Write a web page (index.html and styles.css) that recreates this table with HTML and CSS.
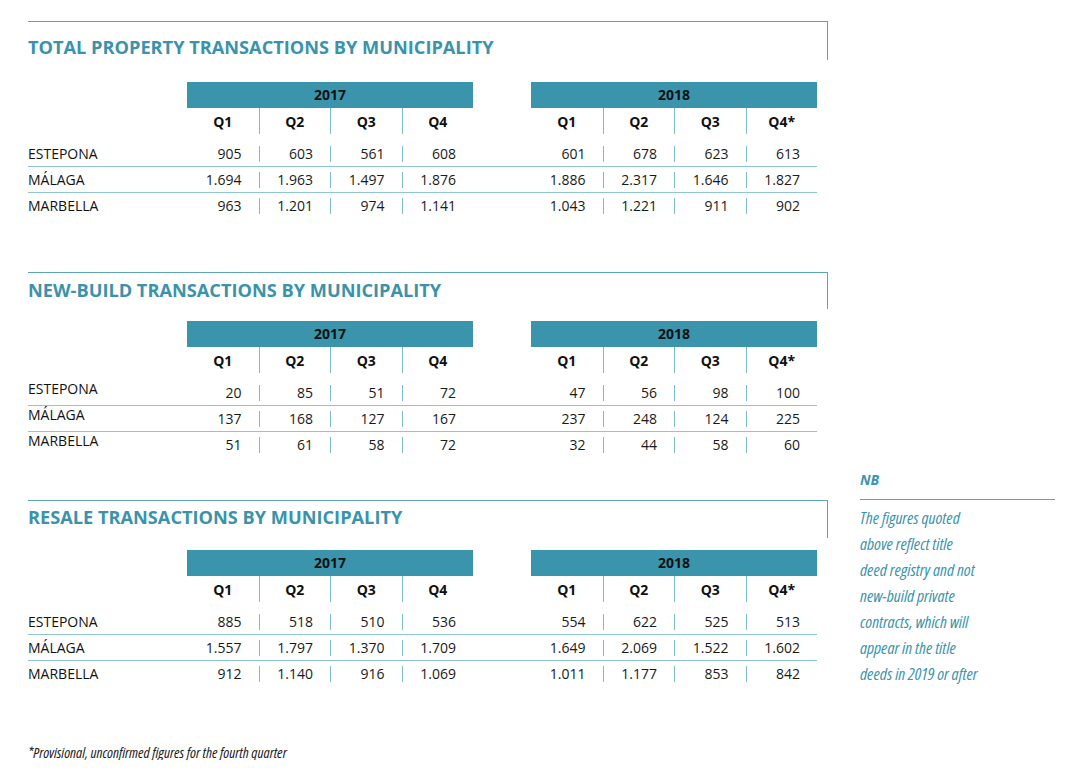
FILE: index.html
```html
<!DOCTYPE html>
<html lang="en">
<head>
<meta charset="utf-8">
<title>Property transactions by municipality</title>
<link rel="stylesheet" href="styles.css">
</head>
<body>
<div class="page">
  <main class="main">
    <section class="section s1">
      <header class="head"><h2 class="title">TOTAL PROPERTY TRANSACTIONS BY MUNICIPALITY</h2></header>
      <div class="table">
        <div class="row years"><span></span><div class="year">2017</div><span></span><div class="year">2018</div></div>
        <div class="row quarters"><span></span><div class="q">Q1</div><div class="q sep">Q2</div><div class="q sep">Q3</div><div class="q sep">Q4</div><span></span><div class="q">Q1</div><div class="q sep">Q2</div><div class="q sep">Q3</div><div class="q sep">Q4*</div></div>
        <div class="row data line"><div class="name">ESTEPONA</div><div class="n">905</div><div class="n sep">603</div><div class="n sep">561</div><div class="n sep">608</div><span></span><div class="n">601</div><div class="n sep">678</div><div class="n sep">623</div><div class="n sep">613</div></div>
        <div class="row data line"><div class="name">MÁLAGA</div><div class="n">1.694</div><div class="n sep">1.963</div><div class="n sep">1.497</div><div class="n sep">1.876</div><span></span><div class="n">1.886</div><div class="n sep">2.317</div><div class="n sep">1.646</div><div class="n sep">1.827</div></div>
        <div class="row data"><div class="name">MARBELLA</div><div class="n">963</div><div class="n sep">1.201</div><div class="n sep">974</div><div class="n sep">1.141</div><span></span><div class="n">1.043</div><div class="n sep">1.221</div><div class="n sep">911</div><div class="n sep">902</div></div>
      </div>
    </section>

    <section class="section s2">
      <header class="head"><h2 class="title">NEW-BUILD TRANSACTIONS BY MUNICIPALITY</h2></header>
      <div class="table">
        <div class="row years"><span></span><div class="year">2017</div><span></span><div class="year">2018</div></div>
        <div class="row quarters"><span></span><div class="q">Q1</div><div class="q sep">Q2</div><div class="q sep">Q3</div><div class="q sep">Q4</div><span></span><div class="q">Q1</div><div class="q sep">Q2</div><div class="q sep">Q3</div><div class="q sep">Q4*</div></div>
        <div class="row data line"><div class="name up">ESTEPONA</div><div class="n">20</div><div class="n sep">85</div><div class="n sep">51</div><div class="n sep">72</div><span></span><div class="n">47</div><div class="n sep">56</div><div class="n sep">98</div><div class="n sep">100</div></div>
        <div class="row data line"><div class="name up">MÁLAGA</div><div class="n">137</div><div class="n sep">168</div><div class="n sep">127</div><div class="n sep">167</div><span></span><div class="n">237</div><div class="n sep">248</div><div class="n sep">124</div><div class="n sep">225</div></div>
        <div class="row data"><div class="name up">MARBELLA</div><div class="n">51</div><div class="n sep">61</div><div class="n sep">58</div><div class="n sep">72</div><span></span><div class="n">32</div><div class="n sep">44</div><div class="n sep">58</div><div class="n sep">60</div></div>
      </div>
    </section>

    <section class="section s3">
      <header class="head"><h2 class="title">RESALE TRANSACTIONS BY MUNICIPALITY</h2></header>
      <div class="table">
        <div class="row years"><span></span><div class="year">2017</div><span></span><div class="year">2018</div></div>
        <div class="row quarters"><span></span><div class="q">Q1</div><div class="q sep">Q2</div><div class="q sep">Q3</div><div class="q sep">Q4</div><span></span><div class="q">Q1</div><div class="q sep">Q2</div><div class="q sep">Q3</div><div class="q sep">Q4*</div></div>
        <div class="row data line"><div class="name">ESTEPONA</div><div class="n">885</div><div class="n sep">518</div><div class="n sep">510</div><div class="n sep">536</div><span></span><div class="n">554</div><div class="n sep">622</div><div class="n sep">525</div><div class="n sep">513</div></div>
        <div class="row data line"><div class="name">MÁLAGA</div><div class="n">1.557</div><div class="n sep">1.797</div><div class="n sep">1.370</div><div class="n sep">1.709</div><span></span><div class="n">1.649</div><div class="n sep">2.069</div><div class="n sep">1.522</div><div class="n sep">1.602</div></div>
        <div class="row data"><div class="name">MARBELLA</div><div class="n">912</div><div class="n sep">1.140</div><div class="n sep">916</div><div class="n sep">1.069</div><span></span><div class="n">1.011</div><div class="n sep">1.177</div><div class="n sep">853</div><div class="n sep">842</div></div>
      </div>
    </section>

    <p class="footnote">*Provisional, unconfirmed figures for the fourth quarter</p>
  </main>

  <aside class="nb">
    <h3 class="nb-title">NB</h3>
    <p class="nb-text">The figures quoted<br>above reflect title<br>deed registry and not<br>new-build private<br>contracts, which will<br>appear in the title<br>deeds in 2019 or after</p>
  </aside>
</div>
</body>
</html>
```

FILE: styles.css
```css
* { box-sizing: border-box; }

html, body {
  margin: 0;
  padding: 0;
  background: #ffffff;
}

body {
  font-family: "Open Sans", "Liberation Sans", sans-serif;
  color: #1a1a1a;
  font-size: 14px;
}

.page {
  display: flex;
  align-items: flex-start;
  padding: 21px 0 0 28px;
}

.main {
  width: 800px;
  display: flex;
  flex-direction: column;
}

.head {
  height: 39px;
  border-top: 1px solid #5ba6b9;
  border-right: 1px solid #5ba6b9;
}

.title {
  margin: 0;
  font-size: 18.2px;
  line-height: 24px;
  font-weight: 700;
  color: #3a93aa;
}

.s1 .head { padding-top: 13px; }
.s1 .table { margin-top: 22px; }

.s2 { margin-top: 53px; }
.s2 .head { height: 37px; padding-top: 5px; }
.s2 .table { margin-top: 12px; }

.s3 { margin-top: 42px; }
.s3 .head { height: 38px; padding-top: 4px; }
.s3 .table { margin-top: 12px; }

.table {
  width: 789px;
  display: flex;
  flex-direction: column;
}

.row {
  display: grid;
  grid-template-columns: 159px repeat(4, 71.5px) 58px repeat(4, 71.5px);
}

.years { height: 26px; }

.year {
  grid-column: span 4;
  background: #3a94ab;
  font-weight: 700;
  font-size: 14px;
  line-height: 26px;
  text-align: center;
  color: #111;
}

.quarters {
  height: 25px;
  margin-bottom: 8px;
}

.q {
  font-weight: 700;
  font-size: 14px;
  line-height: 25px;
  padding-top: 1px;
  text-align: center;
  color: #111;
}

.q.sep { border-left: 1px solid #7dbccb; }

.data {
  height: 26px;
  align-items: center;
}

.data.line {
  border-bottom: 1px solid #8ec5d3;
}

.name {
  font-size: 14px;
  line-height: 16px;
  color: #111;
}

.name.up { margin-top: -8px; }

.n {
  height: 16px;
  font-size: 14px;
  line-height: 16px;
  text-align: right;
  padding-right: 17px;
  color: #1a1a1a;
}

.n.sep { border-left: 1px solid #7dbccb; }

.footnote {
  margin: 57px 0 0 0;
  font-size: 14.8px;
  line-height: 16px;
  font-style: italic;
  font-weight: 400;
  font-stretch: 75%;
  color: #1a1a1a;
}

.nb {
  width: 195px;
  margin-left: 32px;
  margin-top: 448px;
}

.nb-title {
  margin: 0;
  height: 31px;
  font-size: 14px;
  line-height: 22px;
  font-weight: 700;
  font-style: italic;
  color: #3a94ab;
  border-bottom: 1px solid #5ba6b9;
}

.nb-text {
  margin: 0;
  padding-top: 5px;
  font-size: 17px;
  line-height: 26px;
  font-style: italic;
  font-weight: 400;
  font-stretch: 75%;
  color: #3a94ab;
}
```
